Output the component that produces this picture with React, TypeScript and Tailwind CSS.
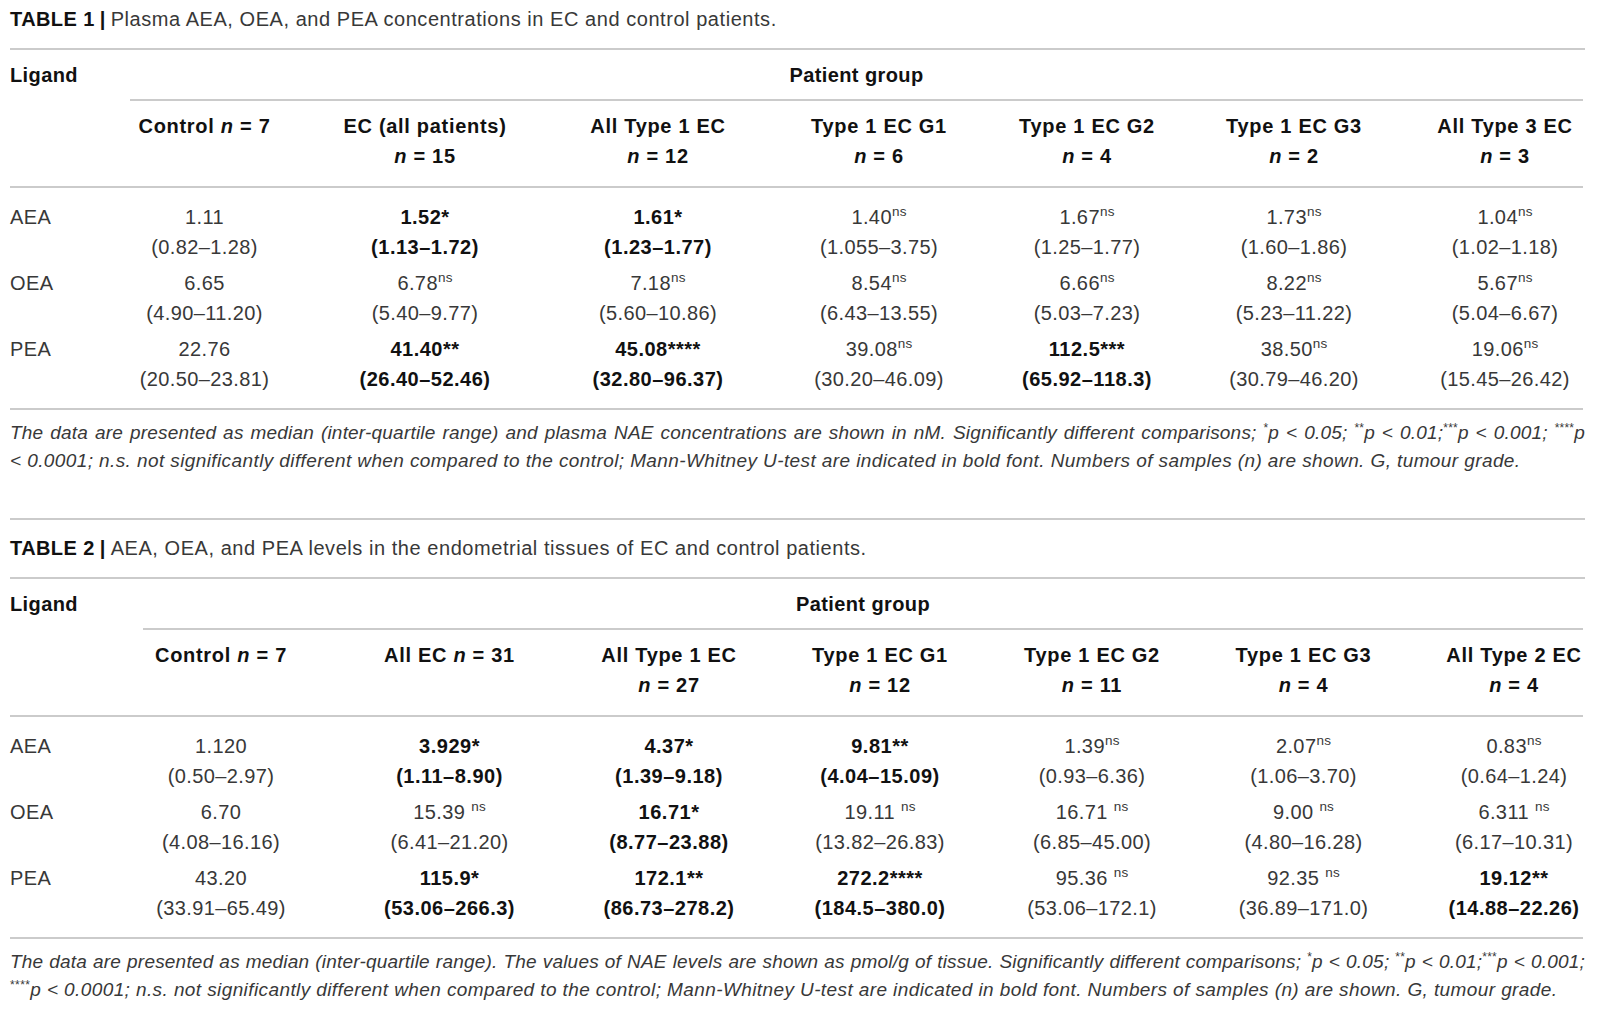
import React from "react";

type Flag = "" | "b" | "ns" | "nss";
type Val = [string, string, Flag];

const Ns = ({ space }: { space?: boolean }) => (
  <>
    {space ? " " : ""}
    <sup className="text-[13.5px] -top-[8px] font-normal tracking-[0.2px]">ns</sup>
  </>
);

function DataCell({ v }: { v: Val }) {
  const [a, r, f] = v;
  const bold = f === "b";
  return (
    <div
      className={`flex flex-col items-center pb-[6px] whitespace-nowrap ${
        bold ? "font-bold text-[#111111] tracking-[0.5px]" : ""
      }`}
    >
      <div className="h-[30px] leading-[30px]">
        {a}
        {f === "ns" && <Ns />}
        {f === "nss" && <Ns space />}
      </div>
      <div className="h-[30px] leading-[30px]">{r}</div>
    </div>
  );
}

function Head({ lines }: { lines: React.ReactNode[] }) {
  return (
    <div className="flex flex-col items-center pt-[10px] pb-[15px] font-bold text-[#111111] tracking-[0.7px] whitespace-nowrap">
      {lines.map((l, i) => (
        <div key={i} className="h-[30px] leading-[30px]">
          {l}
        </div>
      ))}
    </div>
  );
}

const N = ({ v }: { v: string }) => (
  <>
    <i>n</i> = {v}
  </>
);

const Rule = () => <div className="col-span-8 h-[2px] bg-[#cbcbcb]" />;

type TableProps = {
  label: string;
  title: string;
  cols: string;
  heads: React.ReactNode[][];
  rows: [string, Val[]][];
  foot1: React.ReactNode;
  foot2: React.ReactNode;
};

function Table({ label, title, cols, heads, rows, foot1, foot2 }: TableProps) {
  return (
    <div>
      <div className="h-[24px] leading-[24px] whitespace-nowrap">
        <span className="font-bold text-[#111111]">{label}</span>
        <span className="font-bold text-[#111111] px-[5px]">|</span>
        <span className="tracking-[0.55px]">{title}</span>
      </div>
      <div className="mt-[17px] h-[2px] bg-[#cbcbcb]" />
      <div className={`grid ${cols}`}>
        <div className="h-[49px] flex items-center font-bold text-[#111111]">Ligand</div>
        <div className="col-span-7 h-[49px] flex items-center justify-center font-bold text-[#111111]">
          Patient group
        </div>
        <div />
        <div className="col-span-7 h-[2px] bg-[#cbcbcb]" />
        <div />
        {heads.map((h, i) => (
          <Head key={i} lines={h} />
        ))}
        <Rule />
        <div className="col-span-8 h-[14px]" />
        {rows.map(([name, vals]) => (
          <React.Fragment key={name}>
            <div className="h-[30px] leading-[30px]">{name}</div>
            {vals.map((v, i) => (
              <DataCell key={i} v={v} />
            ))}
          </React.Fragment>
        ))}
        <div className="col-span-8 h-[8px]" />
        <Rule />
      </div>
      <div className="mt-[9px] italic text-[19px] leading-[28px]">
        <div className="h-[28px] overflow-visible text-justify [text-align-last:justify] tracking-[0.2px]">
          {foot1}
        </div>
        <div className="whitespace-nowrap tracking-[0.4px]">{foot2}</div>
      </div>
    </div>
  );
}

const S = ({ t }: { t: string }) => (
  <sup className="text-[12px] -top-[7px] not-italic">{t}</sup>
);

export default function App() {
  const rows1: [string, Val[]][] = [
    [
      "AEA",
      [
        ["1.11", "(0.82–1.28)", ""],
        ["1.52*", "(1.13–1.72)", "b"],
        ["1.61*", "(1.23–1.77)", "b"],
        ["1.40", "(1.055–3.75)", "ns"],
        ["1.67", "(1.25–1.77)", "ns"],
        ["1.73", "(1.60–1.86)", "ns"],
        ["1.04", "(1.02–1.18)", "ns"],
      ],
    ],
    [
      "OEA",
      [
        ["6.65", "(4.90–11.20)", ""],
        ["6.78", "(5.40–9.77)", "ns"],
        ["7.18", "(5.60–10.86)", "ns"],
        ["8.54", "(6.43–13.55)", "ns"],
        ["6.66", "(5.03–7.23)", "ns"],
        ["8.22", "(5.23–11.22)", "ns"],
        ["5.67", "(5.04–6.67)", "ns"],
      ],
    ],
    [
      "PEA",
      [
        ["22.76", "(20.50–23.81)", ""],
        ["41.40**", "(26.40–52.46)", "b"],
        ["45.08****", "(32.80–96.37)", "b"],
        ["39.08", "(30.20–46.09)", "ns"],
        ["112.5***", "(65.92–118.3)", "b"],
        ["38.50", "(30.79–46.20)", "ns"],
        ["19.06", "(15.45–26.42)", "ns"],
      ],
    ],
  ];

  const rows2: [string, Val[]][] = [
    [
      "AEA",
      [
        ["1.120", "(0.50–2.97)", ""],
        ["3.929*", "(1.11–8.90)", "b"],
        ["4.37*", "(1.39–9.18)", "b"],
        ["9.81**", "(4.04–15.09)", "b"],
        ["1.39", "(0.93–6.36)", "ns"],
        ["2.07", "(1.06–3.70)", "ns"],
        ["0.83", "(0.64–1.24)", "ns"],
      ],
    ],
    [
      "OEA",
      [
        ["6.70", "(4.08–16.16)", ""],
        ["15.39", "(6.41–21.20)", "nss"],
        ["16.71*", "(8.77–23.88)", "b"],
        ["19.11", "(13.82–26.83)", "nss"],
        ["16.71", "(6.85–45.00)", "nss"],
        ["9.00", "(4.80–16.28)", "nss"],
        ["6.311", "(6.17–10.31)", "nss"],
      ],
    ],
    [
      "PEA",
      [
        ["43.20", "(33.91–65.49)", ""],
        ["115.9*", "(53.06–266.3)", "b"],
        ["172.1**", "(86.73–278.2)", "b"],
        ["272.2****", "(184.5–380.0)", "b"],
        ["95.36", "(53.06–172.1)", "nss"],
        ["92.35", "(36.89–171.0)", "nss"],
        ["19.12**", "(14.88–22.26)", "b"],
      ],
    ],
  ];

  const heads1: React.ReactNode[][] = [
    [<>Control <N v="7" /></>],
    ["EC (all patients)", <N v="15" />],
    ["All Type 1 EC", <N v="12" />],
    ["Type 1 EC G1", <N v="6" />],
    ["Type 1 EC G2", <N v="4" />],
    ["Type 1 EC G3", <N v="2" />],
    ["All Type 3 EC", <N v="3" />],
  ];

  const heads2: React.ReactNode[][] = [
    [<>Control <N v="7" /></>],
    [<>All EC <N v="31" /></>],
    ["All Type 1 EC", <N v="27" />],
    ["Type 1 EC G1", <N v="12" />],
    ["Type 1 EC G2", <N v="11" />],
    ["Type 1 EC G3", <N v="4" />],
    ["All Type 2 EC", <N v="4" />],
  ];

  return (
    <div className="bg-white w-[1600px] h-[1019px] overflow-hidden pl-[10px] pt-[7px] font-['Liberation_Sans',Arial,sans-serif] text-[20px] tracking-[0.4px] text-[#383838]">
      <div className="w-[1575px]">
        <Table
          label="TABLE 1"
          title="Plasma AEA, OEA, and PEA concentrations in EC and control patients."
          cols="grid-cols-[120px_149px_292px_174px_268px_148px_266px_156px]"
          heads={heads1}
          rows={rows1}
          foot1={
            <>
              The data are presented as median (inter-quartile range) and plasma NAE concentrations are
              shown in nM. Significantly different comparisons; <S t="*" />p &lt; 0.05; <S t="**" />p &lt;
              0.01;<S t="***" />p &lt; 0.001; <S t="****" />p
            </>
          }
          foot2={
            <>
              &lt; 0.0001; n.s. not significantly different when compared to the control; Mann-Whitney
              U-test are indicated in bold font. Numbers of samples (n) are shown. G, tumour grade.
            </>
          }
        />
        <div className="mt-[43px] h-[2px] bg-[#cbcbcb] mb-[16px]" />
        <Table
          label="TABLE 2"
          title="AEA, OEA, and PEA levels in the endometrial tissues of EC and control patients."
          cols="grid-cols-[133px_156px_301px_138px_284px_140px_283px_138px]"
          heads={heads2}
          rows={rows2}
          foot1={
            <>
              The data are presented as median (inter-quartile range). The values of NAE levels are shown as
              pmol/g of tissue. Significantly different comparisons; <S t="*" />p &lt; 0.05; <S t="**" />p
              &lt; 0.01;<S t="***" />p &lt; 0.001;
            </>
          }
          foot2={
            <>
              <S t="****" />p &lt; 0.0001; n.s. not significantly different when compared to the control;
              Mann-Whitney U-test are indicated in bold font. Numbers of samples (n) are shown. G, tumour
              grade.
            </>
          }
        />
      </div>
    </div>
  );
}
